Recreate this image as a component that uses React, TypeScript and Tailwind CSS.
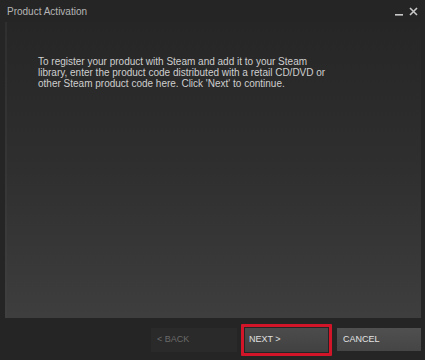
export default function App() {
  return (
    <div className="w-[425px] h-[360px] bg-[#252525] flex flex-col text-[#c8c8c8] font-['Liberation_Sans',Arial,sans-serif] overflow-hidden">
      {/* title bar */}
      <div className="h-[22px] flex items-center justify-between pl-[7px] pr-[7px] shrink-0">
        <span className="text-[10px] text-[#b5b5b5]">Product Activation</span>
        <div className="flex items-center gap-[6px] text-[#c8c8c8]">
          <svg width="8" height="9" viewBox="0 0 8 9">
            <rect x="0" y="7" width="8" height="1.6" fill="currentColor" />
          </svg>
          <svg width="9" height="9" viewBox="0 0 9 9">
            <path d="M1 1 L8 8 M8 1 L1 8" stroke="currentColor" strokeWidth="1.6" />
          </svg>
        </div>
      </div>

      {/* content panel */}
      <div className="flex-1 mx-[5px] mr-[4px] bg-linear-to-b from-[#262626] via-[#2f2f2f] to-[#3e3e3e] border-l-2 border-[#444]/30 pl-[31px] pt-[34px]">
        <p className="text-[10px] leading-[11px] text-[#cfcfcf] w-[300px]">
          To register your product with Steam and add it to your Steam library, enter the product code distributed with a retail CD/DVD or other Steam product code here. Click 'Next' to continue.
        </p>
      </div>

      {/* footer */}
      <div className="h-[42px] shrink-0 flex items-center justify-end pr-[4px] pt-[1px]">
        <div className="w-[86px] h-[24px] bg-[#2a2a2a] flex items-center pl-[6px] text-[9px] text-[#6a6a6a]">
          &lt; BACK
        </div>
        <div className="ml-[4px] border-[3px] border-[#d3152a] p-[1px] rounded-[1px]">
          <div className="w-[83px] h-[24px] bg-linear-to-b from-[#4c4c4c] to-[#414141] flex items-center pl-[4px] text-[9px] text-[#e0e0e0]">
            NEXT &gt;
          </div>
        </div>
        <div className="ml-[5px] w-[84px] h-[23px] bg-linear-to-b from-[#505050] to-[#454545] flex items-center pl-[6px] text-[9px] text-[#e4e4e4]">
          CANCEL
        </div>
      </div>
    </div>
  );
}
